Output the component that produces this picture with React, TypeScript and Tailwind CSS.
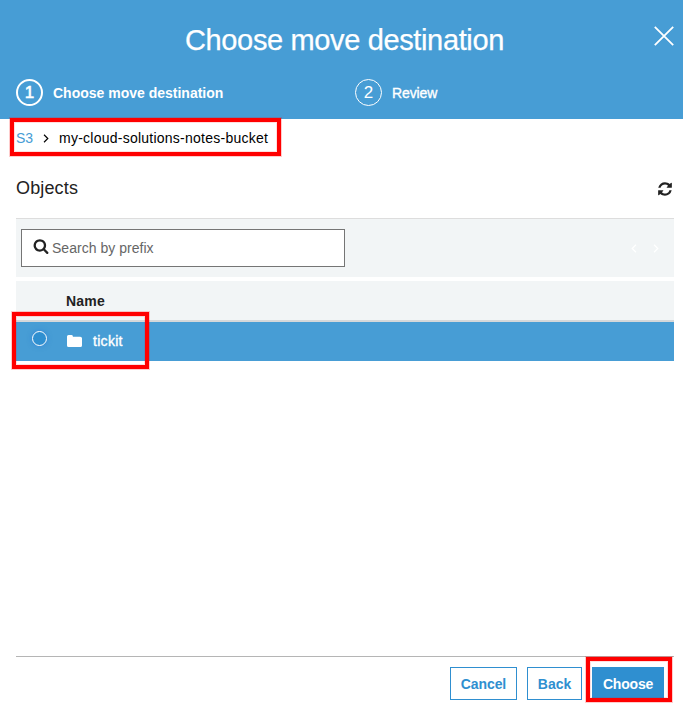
import type { ReactNode } from "react";

function Icon({ d, className }: { d: string; className: string }) {
  return (
    <svg viewBox="0 0 1792 1792" fill="currentColor" className={className}>
      <path d={d} />
    </svg>
  );
}

const SEARCH =
  "M1216 832q0-185-131.5-316.5t-316.5-131.5-316.5 131.5-131.5 316.5 131.5 316.5 316.5 131.5 316.5-131.5 131.5-316.5zm512 832q0 52-38 90t-90 38q-54 0-90-38l-343-342q-179 124-399 124-143 0-273.5-55.5t-225-150-150-225-55.5-273.5 55.5-273.5 150-225 225-150 273.5-55.5 273.5 55.5 225 150 150 225 55.5 273.5q0 220-124 399l343 343q37 37 37 90z";
const REFRESH =
  "M1639 1056q0 5-1 7-64 268-268 434.5t-478 166.5q-146 0-282.5-55t-243.5-157l-129 129q-19 19-45 19t-45-19-19-45v-448q0-26 19-45t45-19h448q26 0 45 19t19 45-19 45l-137 137q71 66 161 102t187 36q134 0 250-65t186-179q11-17 53-117 8-23 30-23h192q13 0 22.5 9.5t9.5 22.5zm25-800v448q0 26-19 45t-45 19h-448q-26 0-45-19t-19-45 19-45l138-138q-148-137-349-137-134 0-250 65t-186 179q-11 17-53 117-8 23-30 23h-199q-13 0-22.5-9.5t-9.5-22.5v-7q65-268 270-434.5t480-166.5q146 0 284 55.5t245 156.5l130-129q19-19 45-19t45 19 19 45z";

function Chevron({ className, flip = false }: { className: string; flip?: boolean }) {
  return (
    <svg viewBox="0 0 6 10" fill="none" stroke="currentColor" className={className}>
      <path d={flip ? "M5.2 0.8L1 5l4.2 4.2" : "M0.8 0.8L5 5 0.8 9.2"} strokeWidth="1.3" />
    </svg>
  );
}

function Highlight({ className }: { className: string }) {
  return (
    <div
      className={`pointer-events-none absolute border-4 border-[#ff0000] shadow-[0_0_0_1px_rgba(255,0,0,0.2),inset_0_0_0_1px_rgba(255,0,0,0.13)] ${className}`}
    />
  );
}

function OutlineButton({ className, children }: { className: string; children: ReactNode }) {
  return (
    <button
      className={`h-[33px] border border-[#2f8fd0] bg-white pt-px text-sm font-bold text-[#2f8fd0] ${className}`}
    >
      {children}
    </button>
  );
}

export default function App() {
  return (
    <div className="relative flex h-[709px] w-[683px] flex-col overflow-hidden bg-white font-['Liberation_Sans',Arial,sans-serif] text-sm whitespace-nowrap text-[#222]">
      <header className="h-[119px] shrink-0 bg-[#479dd5] text-white">
        <div className="flex h-[79px] items-start justify-between pt-[23px] pr-[9px] pl-[185px]">
          <h1 className="text-[29px] leading-[34px] tracking-[-0.36px] [-webkit-text-stroke:0.25px_white]">
            Choose move destination
          </h1>
          <svg viewBox="0 0 20 20" stroke="currentColor" className="mt-[3px] size-5">
            <path d="M0.8 0.8L19.2 19.2M19.2 0.8L0.8 19.2" strokeWidth="1.8" />
          </svg>
        </div>
        <ol className="flex h-[27px] items-center pl-4">
          <li className="flex w-[339px] items-center font-bold">
            <span className="mr-[10px] flex size-[27px] items-center justify-center rounded-full border-2 border-white pt-[2px] text-[17px] font-normal [-webkit-text-stroke:0.6px_white]">
              1
            </span>
            Choose move destination
          </li>
          <li className="flex items-center">
            <span className="mr-[10px] flex size-[27px] items-center justify-center rounded-full border border-white pt-[2px] text-[17px]">
              2
            </span>
            <span className="tracking-[-0.1px] [-webkit-text-stroke:0.35px_white]">Review</span>
          </li>
        </ol>
      </header>

      <nav className="flex h-[38px] shrink-0 items-center pl-4 text-black">
        <span className="w-[27px] text-[#479dd5]">S3</span>
        <Chevron className="mr-[10px] h-[9px] w-[6px]" />
        <span className="tracking-[0.245px]">my-cloud-solutions-notes-bucket</span>
      </nav>

      <main className="mr-[9px] ml-4 flex flex-1 flex-col">
        <div className="flex h-[61px] items-center justify-between pr-px text-[#222]">
          <h2 className="text-lg tracking-[0.15px]">Objects</h2>
          <Icon d={REFRESH} className="mt-[2px] size-4" />
        </div>
        <div className="flex h-[59px] items-center justify-between border-t border-[#ddd] bg-[#f2f5f6] pr-[15px] pl-[5px]">
          <div className="flex h-[38px] w-[324px] items-center border border-[#757575] bg-white pl-[11px] text-[#666]">
            <Icon d={SEARCH} className="mr-[3px] mb-[4px] size-4 text-[#222]" />
            <span className="tracking-[0.03px]">Search by prefix</span>
          </div>
          <div className="flex gap-4 text-white">
            <Chevron flip className="h-[9px] w-[6px]" />
            <Chevron className="h-[9px] w-[6px]" />
          </div>
        </div>
        <div className="mt-1 flex h-[41px] items-center border-b-2 border-[#d5d8da] bg-[#f2f5f6] pl-[50px] font-bold tracking-[0.2px]">
          Name
        </div>
        <div className="flex h-[39px] items-center bg-[#479dd5] pb-[2px] pl-4 text-white">
          <span className="mr-5 mb-[5px] size-[15px] rounded-full border border-white bg-[#2f8fd0] shadow-[0_0_4px_1px_rgba(47,127,218,0.5)]" />
          <svg viewBox="0 0 15 12" fill="currentColor" className="mr-[11px] h-3 w-[15px]">
            <path d="M0 1.5Q0 0 1.5 0H4.4Q5.8 0 5.9 1.4V1.7H13.2Q15 1.7 15 3.3V10.4Q15 12 13.4 12H1.6Q0 12 0 10.4Z" />
          </svg>
          <span className="tracking-[0.3px] [-webkit-text-stroke:0.35px_white]">tickit</span>
        </div>
      </main>

      <footer className="mr-[9px] ml-4 flex h-[53px] shrink-0 items-start justify-end border-t border-[#b5b5b5] pt-[10px] pr-[10px]">
        <OutlineButton className="mr-[10px] w-[67px] tracking-[-0.1px]">Cancel</OutlineButton>
        <OutlineButton className="mr-[10px] w-[55px]">Back</OutlineButton>
        <button className="h-[33px] w-[72px] bg-[#2f8fd0] pt-px font-bold tracking-[-0.2px] text-white">
          Choose
        </button>
      </footer>

      <Highlight className="top-[118px] left-[10px] h-[38px] w-[271px]" />
      <Highlight className="top-[312px] left-[12px] h-[57px] w-[137px]" />
      <Highlight className="top-[657px] left-[586px] h-[45px] w-[86px]" />
    </div>
  );
}
